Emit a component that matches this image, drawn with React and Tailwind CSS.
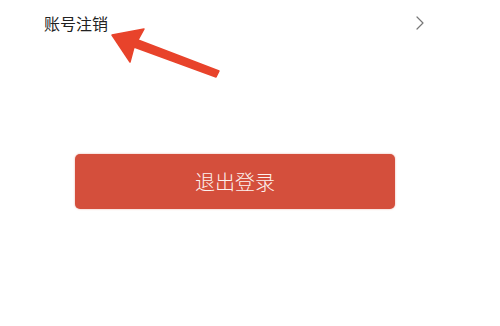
import React from 'react';

const Chevron = () => (
  <svg width="8" height="14" viewBox="0 0 8 14" fill="none">
    <path d="M1 1l6 6-6 6" stroke="#777" strokeWidth="1.2" strokeLinecap="round" strokeLinejoin="round" />
  </svg>
);

// red annotation arrow drawn over the page
const Arrow = () => (
  <svg className="absolute left-0 top-0 pointer-events-none" width="500" height="100" viewBox="0 0 500 100">
    <path d="M112 35 L144 29 L138 40 L219 71 L216 77 L134 47 L130 62 Z" fill="#e8432b" strokeLinejoin="round" stroke="#e8432b" strokeWidth="1.5" />
  </svg>
);

export default function App() {
  return (
    <div
      className="relative w-[500px] h-[326px] bg-white overflow-hidden"
      style={{ fontFamily: '"Noto Sans CJK SC", "Noto Sans", sans-serif' }}
    >
      <div className="flex items-center justify-between pl-[44px] pr-[76px] pt-[6px] h-[40px]">
        <span className="text-[16px] leading-none text-[#222]">账号注销</span>
        <Chevron />
      </div>
      <div className="flex pt-[114px] pl-[75px]">
        <button className="w-[320px] h-[55px] rounded-[5px] bg-[#d44f3c] text-[#fdf2ef] text-[20px] font-light flex items-center justify-center shadow-[0_0_2px_rgba(212,79,60,0.5)]">
          退出登录
        </button>
      </div>
      <Arrow />
    </div>
  );
}
